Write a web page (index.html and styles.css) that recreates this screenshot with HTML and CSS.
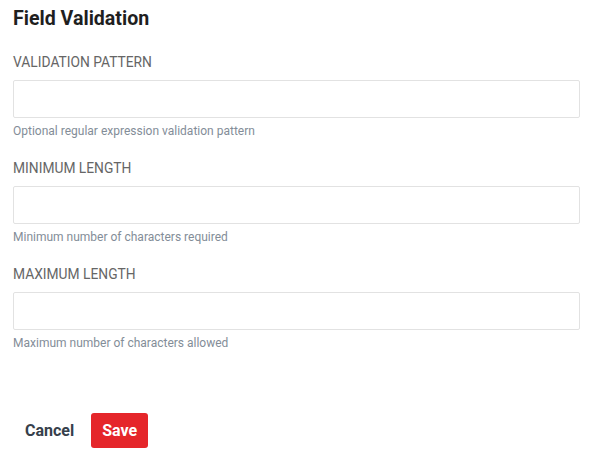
FILE: index.html
```html
<!DOCTYPE html>
<html lang="en">
<head>
<meta charset="utf-8">
<title>Field Validation</title>
<link rel="stylesheet" href="styles.css">
</head>
<body>
<div class="panel">
  <h2 class="title">Field Validation</h2>
  <div class="fields">
    <div class="field">
      <label class="label" for="pattern">VALIDATION PATTERN</label>
      <input class="input" id="pattern" type="text">
      <div class="help">Optional regular expression validation pattern</div>
    </div>
    <div class="field">
      <label class="label" for="minlen">MINIMUM LENGTH</label>
      <input class="input" id="minlen" type="text">
      <div class="help">Minimum number of characters required</div>
    </div>
    <div class="field">
      <label class="label" for="maxlen">MAXIMUM LENGTH</label>
      <input class="input" id="maxlen" type="text">
      <div class="help">Maximum number of characters allowed</div>
    </div>
  </div>
  <div class="actions">
    <button class="btn btn-cancel" type="button">Cancel</button>
    <button class="btn btn-save" type="button">Save</button>
  </div>
</div>
</body>
</html>
```
FILE: styles.css
```css
* { box-sizing: border-box; }
html, body { margin: 0; padding: 0; background: #fff; }
body { font-family: Roboto, "Liberation Sans", sans-serif; }
.panel { padding: 7px 14px 0 13px; }
.title {
  margin: 0;
  font-size: 19.6px;
  line-height: 24px;
  font-weight: 700;
  color: #1f1f1f;
}
.fields { display: flex; flex-direction: column; gap: 18px; margin-top: 20px; }
.field { display: flex; flex-direction: column; }
.label {
  font-size: 13.8px;
  line-height: 20px;
  font-weight: 400;
  color: #666666;
  margin-top: 1px;
  margin-bottom: 8px;
}
.input {
  display: block;
  width: 100%;
  height: 38px;
  border: 1px solid #e2e2e2;
  border-radius: 2px;
  background: #fff;
  margin: 0;
  padding: 0 10px;
  font: inherit;
}
.help {
  margin-top: 5px;
  font-size: 12px;
  line-height: 16px;
  color: #838d98;
}
.actions { display: flex; align-items: center; gap: 5px; margin-top: 62px; }
.btn {
  font-family: inherit;
  font-size: 16px;
  font-weight: 700;
  line-height: 19px;
  border: 0;
  border-radius: 3px;
  cursor: pointer;
}
.btn-cancel { background: transparent; color: #36404b; padding: 8px 12px; }
.btn-save { background: #e5262a; color: #fff; padding: 8px 11px; height: 35px; }
```
